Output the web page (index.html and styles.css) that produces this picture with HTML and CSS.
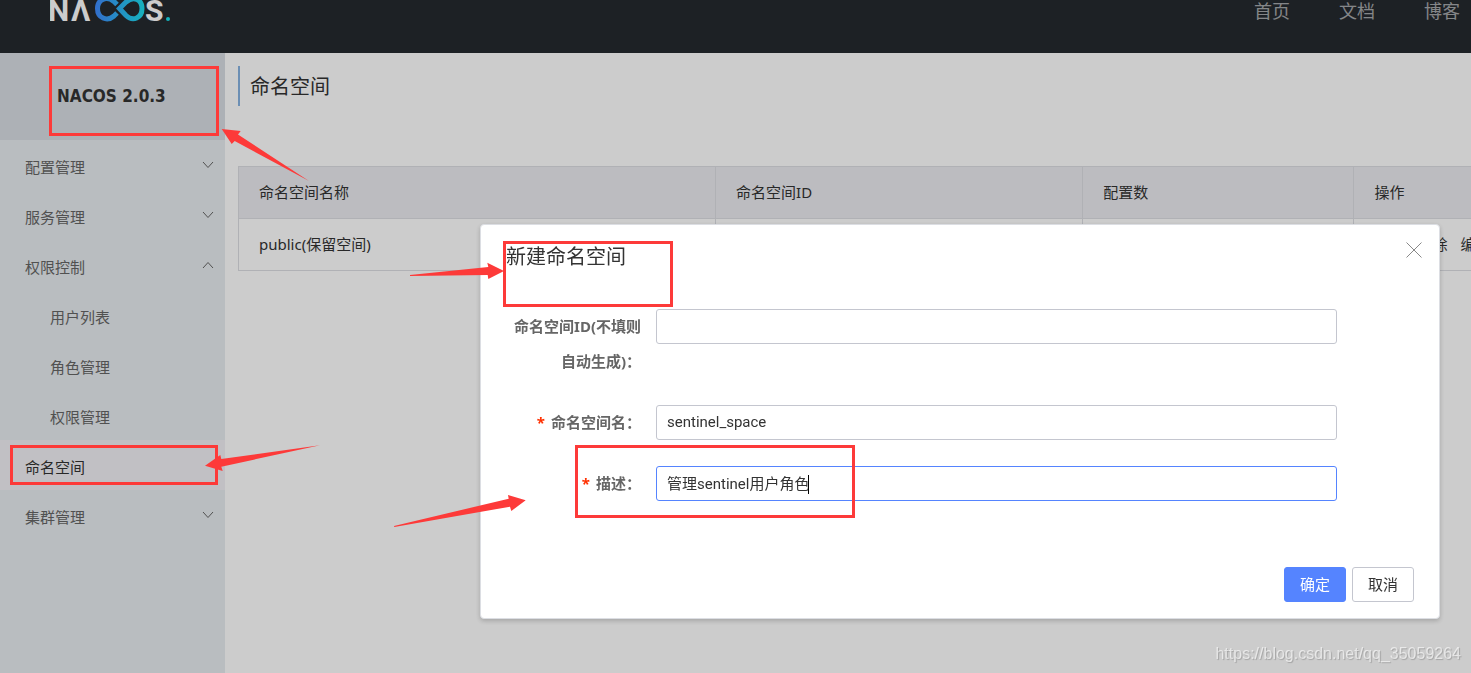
FILE: index.html
```html
<!DOCTYPE html>
<html lang="zh-CN">
<head>
<meta charset="utf-8">
<title>Nacos</title>
<link rel="stylesheet" href="styles.css">
</head>
<body>
<div class="page">
  <header class="topbar">
    <a class="logo" href="#" aria-label="Nacos">
      <svg width="122" height="23" viewBox="0 0 122 23">
        <defs>
          <linearGradient id="loop" gradientUnits="userSpaceOnUse" x1="46" y1="0" x2="95" y2="0">
            <stop offset="0" stop-color="#3f8cff"/>
            <stop offset="1" stop-color="#1be0ee"/>
          </linearGradient>
        </defs>
        <text class="logo-letter" x="-2" y="21">N</text>
        <text class="logo-letter" x="21" y="21">Λ</text>
        <g fill="none" stroke="url(#loop)" stroke-width="5">
          <path d="M67 4.500 L64 1.500 C56 -5 47.500 0 47.500 8.500 C47.500 18 57 22 64 16 L67 13"/>
          <path d="M69.500 8.500 L76 2 C84 -5 92 0 92 8.500 C92 18 83 22 76 15.500 Z"/>
        </g>
        <text class="logo-letter" x="95" y="21">S</text>
        <circle cx="118" cy="19" r="2" fill="#1be0ee"/>
      </svg>
    </a>
    <nav class="topnav">
      <a href="#">首页</a>
      <a href="#">文档</a>
      <a href="#">博客</a>
    </nav>
  </header>
  <div class="body">
    <aside class="sidebar">
      <h1 class="version">NACOS 2.0.3</h1>
      <nav class="menu">
        <button class="item" type="button">配置管理<svg class="chev" viewBox="0 0 12 8"><path d="M1 1l5 5.500 5-5.500"/></svg></button>
        <button class="item" type="button">服务管理<svg class="chev" viewBox="0 0 12 8"><path d="M1 1l5 5.500 5-5.500"/></svg></button>
        <button class="item" type="button">权限控制<svg class="chev" viewBox="0 0 12 8"><path d="M1 7l5-5.500 5 5.500"/></svg></button>
        <a class="item sub" href="#">用户列表</a>
        <a class="item sub" href="#">角色管理</a>
        <a class="item sub" href="#">权限管理</a>
        <a class="item active" href="#">命名空间</a>
        <button class="item" type="button">集群管理<svg class="chev" viewBox="0 0 12 8"><path d="M1 1l5 5.500 5-5.500"/></svg></button>
      </nav>
    </aside>
    <main class="main">
      <h2 class="title">命名空间</h2>
      <table class="table">
        <colgroup><col class="c-name"><col class="c-id"><col class="c-count"><col></colgroup>
        <thead><tr><th>命名空间名称</th><th>命名空间ID</th><th>配置数</th><th>操作</th></tr></thead>
        <tbody><tr><td>public(保留空间)</td><td></td><td></td><td><div class="ops"><a href="#">详情</a><a href="#">删除</a><a href="#">编辑</a></div></td></tr></tbody>
      </table>
    </main>
  </div>
</div>

<div class="overlay">
  <section class="dialog" role="dialog" aria-labelledby="dlg-title">
    <div class="dialog-head">
      <h2 class="dialog-title" id="dlg-title">新建命名空间</h2>
      <button class="close" type="button" aria-label="关闭"><svg width="16" height="16" viewBox="0 0 16 16"><path d="M.5 .5l15 15M15.500 .5l-15 15"/></svg></button>
    </div>
    <form class="form">
      <div class="row">
        <label for="ns-id">命名空间ID(不填则自动生成)：</label>
        <div class="field"><input id="ns-id" type="text"></div>
      </div>
      <div class="row">
        <label for="ns-name" class="required">命名空间名：</label>
        <div class="field"><input id="ns-name" type="text" value="sentinel_space"></div>
      </div>
      <div class="row">
        <label for="ns-desc" class="required">描述：</label>
        <div class="field"><input id="ns-desc" class="focused" type="text" value="管理sentinel用户角色"><span class="caret"></span></div>
      </div>
    </form>
    <div class="actions">
      <button class="btn primary" type="button">确定</button>
      <button class="btn" type="button">取消</button>
    </div>
  </section>
</div>

<svg class="marks" width="1471" height="673" viewBox="0 0 1471 673" aria-hidden="true">
  <g fill="none" stroke="#fd3a39" stroke-width="3">
    <rect x="50.500" y="67.500" width="167" height="67"/>
    <rect x="11.500" y="446.500" width="205" height="37"/>
    <rect x="504.500" y="242.500" width="167" height="63"/>
    <rect x="576.500" y="446.500" width="277" height="70"/>
  </g>
  <g fill="#fd3a39">
    <path d="M221.700 129L240.700 131 238 134.500 309 181 234.700 141 231.700 144Z"/>
    <path d="M205 465.700L220.300 455 221.300 459 320 445.300 221.300 466.700 222.700 471Z"/>
    <path d="M504 271L487.300 262.700 488.300 267 410 275 410 276 487.700 275 488.300 279Z"/>
    <path d="M525.700 500.300L508 495 508.700 498.700 394 526 394.300 527 510 506.700 511.300 511Z"/>
  </g>
</svg>
<div class="watermark">https://blog.csdn.net/qq_35059264</div>
</body>
</html>
```
FILE: styles.css
```css
* { box-sizing: border-box; }

body {
  margin: 0;
  font-family: "Noto Sans", "Noto Sans CJK SC", sans-serif;
  font-size: 15px;
  color: #333;
  background: #fff;
}

h1, h2 { margin: 0; font-weight: 400; }
a { color: inherit; text-decoration: none; }
button, input { font: inherit; color: inherit; }

.page {
  display: flex;
  flex-direction: column;
  height: 100vh;
  overflow: hidden;
}

/* top bar */
.topbar {
  display: flex;
  justify-content: space-between;
  align-items: flex-start;
  padding: 0 11px 30px 50px;
  background: #252a2f;
}
.logo { display: block; height: 23px; }
.logo svg { display: block; }
.logo-letter {
  font-family: Roboto, sans-serif;
  font-size: 30px;
  font-weight: 700;
  fill: #fff;
}
.topnav {
  display: flex;
  gap: 49px;
  font-size: 18px;
  line-height: 22px;
  color: rgba(255, 255, 255, .6);
}

.body { display: flex; flex: 1; min-height: 0; }

/* side menu */
.sidebar { flex: 0 0 225px; background: #e8edf0; }
.version {
  height: 87px;
  padding-left: 57px;
  font-family: "DejaVu Sans Condensed", "DejaVu Sans", sans-serif;
  font-size: 17px;
  font-weight: 700;
  line-height: 87px;
  white-space: nowrap;
  background: #d9dee4;
}
.menu { display: flex; flex-direction: column; }
.item {
  display: flex;
  justify-content: space-between;
  align-items: center;
  height: 50px;
  padding: 2px 11px 0 25px;
  border: 0;
  background: none;
  color: #666;
  text-align: left;
}
.item.sub { padding-left: 50px; }
.item.active { background: #f2f1f5; color: #333; }
.chev {
  width: 12px;
  height: 8px;
  margin-bottom: 2px;
  fill: none;
  stroke: #666;
  stroke-width: 1;
}

/* content */
.main { flex: 1; min-width: 0; padding: 13px 0 0 13px; overflow: hidden; }
.title {
  height: 40px;
  margin-bottom: 60px;
  padding-left: 10px;
  border-left: 2px solid #87b3e2;
  font-size: 20px;
  line-height: 42px;
}
.table {
  width: 110%;
  table-layout: fixed;
  border-collapse: collapse;
}
.c-name { width: 35.2%; }
.c-id { width: 27.1%; }
.c-count { width: 20%; }
.table th, .table td {
  height: 52px;
  padding: 0 20px 2px;
  border: 1px solid #dcdee3;
  font-weight: 400;
  text-align: left;
}
.table th { background: #ebecf0; }
.ops { display: flex; gap: 13px; white-space: nowrap; }

/* dialog */
.overlay {
  position: fixed;
  inset: 0;
  display: flex;
  justify-content: flex-end;
  align-items: flex-start;
  padding: 224px 31px 0 0;
  background: rgba(0, 0, 0, .2);
}
.dialog {
  width: 960px;
  padding: 16px 25px 16px;
  border: 1px solid #dcdee3;
  border-radius: 4px;
  background: #fff;
  box-shadow: 0 2px 5px rgba(0, 0, 0, .2);
}
.dialog-head {
  display: flex;
  justify-content: space-between;
  align-items: flex-start;
  margin-bottom: 36px;
}
.dialog-title { font-size: 20px; line-height: 32px; }
.close {
  width: 16px;
  height: 16px;
  margin: 1px -8px 0 0;
  padding: 0;
  border: 0;
  background: none;
}
.close svg { display: block; fill: none; stroke: #888; }
.form { display: flex; flex-direction: column; gap: 26px; padding-right: 77px; }
.row { display: flex; align-items: flex-start; gap: 15px; }
.row label {
  flex: 0 0 135px;
  color: #666;
  font-weight: 700;
  line-height: 35px;
  text-align: right;
}
.required::before { content: "*"; margin-right: 6px; color: #ff3000; }
.field { position: relative; flex: 1; }
.field input {
  display: block;
  width: 100%;
  height: 35px;
  padding: 0 10px 2px;
  border: 1px solid #c4c6cf;
  border-radius: 3px;
  background: #fff;
  font-family: Roboto, "Noto Sans CJK SC", sans-serif;
  outline: 0;
}
.field input.focused { border-color: #5584ff; }
.caret {
  position: absolute;
  top: 9px;
  left: 152px;
  width: 1px;
  height: 19px;
  background: #000;
}
.actions { display: flex; justify-content: flex-end; gap: 6px; margin-top: 66px; }
.btn {
  height: 35px;
  padding: 0 15px 2px;
  border: 1px solid #c4c6cf;
  border-radius: 3px;
  background: #fff;
}
.btn.primary { border-color: #5584ff; background: #5584ff; color: #fff; }

/* annotations */
.marks { position: absolute; top: 0; left: 0; pointer-events: none; }
.watermark {
  position: fixed;
  right: 10px;
  bottom: 9px;
  font-family: "Liberation Sans", Arial, sans-serif;
  font-size: 16px;
  line-height: 20px;
  color: rgba(255, 255, 255, .6);
  text-shadow: 1px 1px 1px rgba(0, 0, 0, .2);
}
```
